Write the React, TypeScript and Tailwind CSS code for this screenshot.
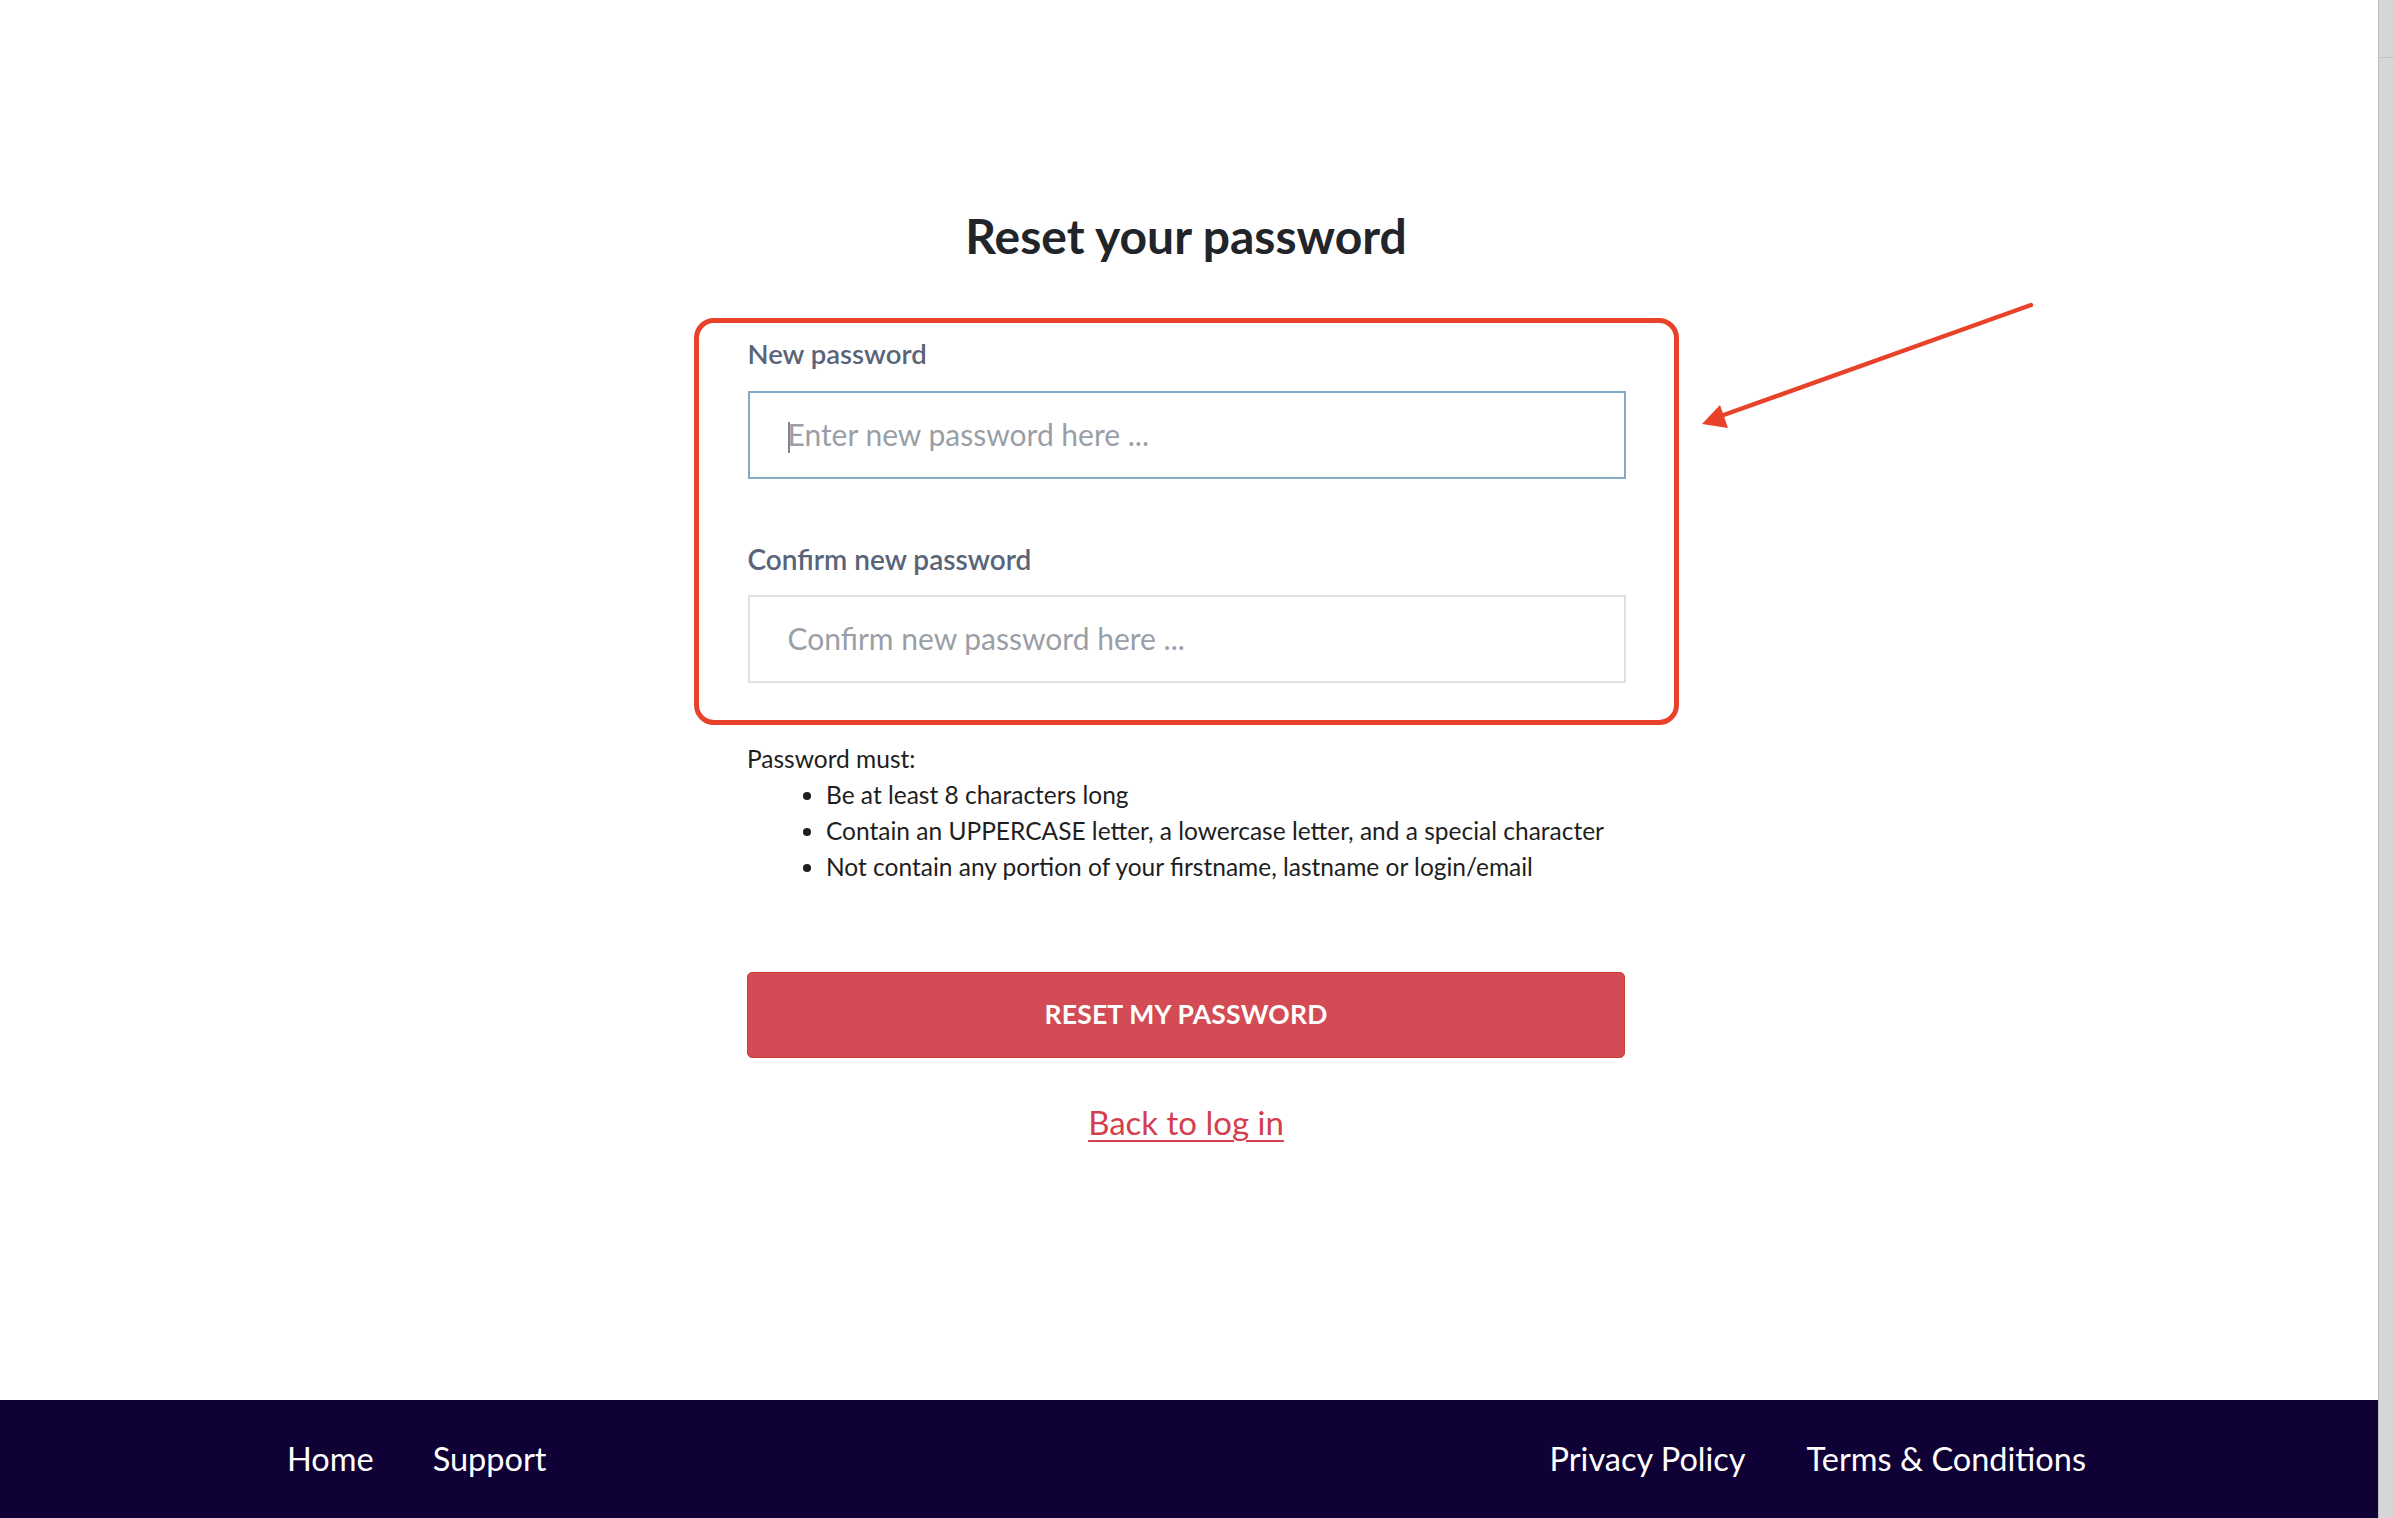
import React from "react";

export default function App() {
  const font = { fontFamily: "Lato, 'Open Sans', sans-serif" };
  return (
    <div className="flex h-[1518px] w-[2394px] overflow-hidden bg-white" style={font}>
      <div className="relative flex flex-1 flex-col">
        <main className="flex h-[1400px] flex-col items-center pr-[6px] pt-[208px]">
          <h1 className="text-[48px] font-bold leading-[56px] text-[#212529]">Reset your password</h1>
          <div className="mt-[54px] w-[985px] rounded-[20px] border-[5px] border-[#e8432a] pb-[37px] pl-[49px] pr-[48px] pt-[15px]">
            <label className="block text-[27.5px] font-semibold leading-[32px] text-[#5a6478]">New password</label>
            <div className="relative mt-[21px]">
              <input
                type="password"
                placeholder="Enter new password here ..."
                className="h-[88px] w-full border-2 border-[#82aac6] bg-white pb-[3px] pl-[38px] text-[30px] text-[#333] outline-none placeholder:text-[#9a9fa7]"
              />
              <span className="absolute left-[40px] top-[31px] h-[31px] w-[2px] bg-[#7d8591]" />
            </div>
            <label className="mt-[64px] block text-[28px] font-semibold leading-[32px] text-[#5a6478]">Confirm new password</label>
            <input
              type="password"
              placeholder="Confirm new password here ..."
              className="mt-[20px] h-[88px] w-full border-2 border-[#dfe0e5] bg-white pb-[3px] pl-[38px] text-[30px] text-[#333] outline-none placeholder:text-[#9a9fa7]"
            />
          </div>
          <div className="mt-[16px] w-[878px] text-[24.5px] leading-[36px] text-[#1e1e1e]">
            <p>Password must:</p>
            <ul className="list-disc pl-[79px]">
              <li>Be at least 8 characters long</li>
              <li>Contain an UPPERCASE letter, a lowercase letter, and a special character</li>
              <li>Not contain any portion of your firstname, lastname or login/email</li>
            </ul>
          </div>
          <button className="mt-[87px] flex h-[86px] w-[878px] items-center justify-center rounded-[5px] border border-[#c9412f] bg-[#d24b55] text-[26.5px] font-bold tracking-[0.2px] text-white">
            RESET MY PASSWORD
          </button>
          <a href="#" className="mt-[44px] text-[33px] leading-[40px] text-[#d33f4e] underline decoration-[2px] underline-offset-[5px]">
            Back to log in
          </a>
        </main>
        <footer className="flex h-[118px] items-center justify-between bg-[#0f0036] pl-[287px] pr-[292px] text-[32.5px] text-white">
          <div className="flex gap-[59px]">
            <a href="#">Home</a>
            <a href="#">Support</a>
          </div>
          <div className="flex gap-[61px]">
            <a href="#">Privacy Policy</a>
            <a href="#">Terms &amp; Conditions</a>
          </div>
        </footer>
        <svg className="pointer-events-none absolute left-0 top-0" width="2378" height="1400">
          <line x1="2031" y1="305" x2="1718" y2="417" stroke="#e8432a" strokeWidth="4.5" strokeLinecap="round" />
          <polygon points="1702,424 1720,405 1728,428" fill="#e8432a" />
        </svg>
      </div>
      <div className="flex w-[16px] flex-col border-l border-[#bcbcbc] bg-[#d6d6d6]">
        <div className="h-[58px] border-b border-[#c2c2c2]" />
      </div>
    </div>
  );
}
